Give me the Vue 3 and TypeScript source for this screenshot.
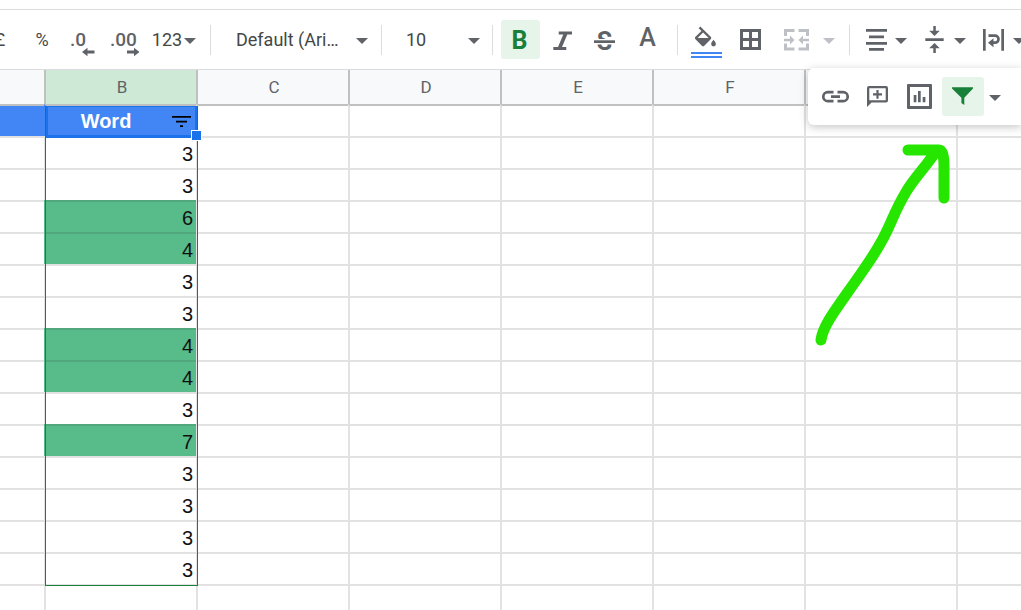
<script setup lang="ts">
import { ref } from 'vue'

interface Row {
  value: string
  marked: boolean
}

const columns: string[] = ['B', 'C', 'D', 'E', 'F', 'G', 'H']
const emptyColumns: string[] = columns.slice(1)
const values: number[] = [3, 3, 6, 4, 3, 3, 4, 4, 3, 7, 3, 3, 3, 3]
const rows: Row[] = values.map((n) => ({ value: String(n), marked: n > 3 }))

const fontFamily = ref('default')
const fontSize = ref('10')
const filterOn = ref(true)
</script>

<template>
  <div class="app">
    <div class="toolbar" role="toolbar" aria-label="Formatting">
      <button type="button" class="tool first">£</button>
      <button type="button" class="tool percent">%</button>
      <button type="button" class="tool decimal-less" aria-label="Decrease decimal places">
        <svg width="40" height="39" viewBox="64 20 40 39">
          <text x="70" y="46" class="digits">.0</text>
          <path d="M82 52l5.500-4.300v2.800h7v3h-7v2.800z" />
        </svg>
      </button>
      <button type="button" class="tool decimal-more" aria-label="Increase decimal places">
        <svg width="44" height="39" viewBox="104 20 44 39">
          <text x="110" y="46" class="digits">.00</text>
          <path d="M139.500 52l-5.500-4.300v2.800h-7v3h7v2.800z" />
        </svg>
      </button>
      <button type="button" class="tool formats">
        <span>123</span>
        <svg class="caret" width="12" height="6" viewBox="0 0 12 6"><path d="M0 0h12L6 6z" /></svg>
      </button>
      <span class="rule"></span>
      <label class="picker family">
        <select v-model="fontFamily" aria-label="Font">
          <option value="default">Default (Ari…</option>
        </select>
        <svg class="caret" width="12" height="6" viewBox="0 0 12 6"><path d="M0 0h12L6 6z" /></svg>
      </label>
      <span class="rule"></span>
      <label class="picker size">
        <select v-model="fontSize" aria-label="Font size">
          <option value="10">10</option>
        </select>
        <svg class="caret" width="12" height="6" viewBox="0 0 12 6"><path d="M0 0h12L6 6z" /></svg>
      </label>
      <span class="rule"></span>
      <div class="styles">
        <button type="button" class="tool square active" aria-label="Bold" aria-pressed="true">
          <svg width="39" height="39" viewBox="501 20 39 39"><text x="511.500" y="49" class="bold">B</text></svg>
        </button>
        <button type="button" class="tool square" aria-label="Italic">
          <svg width="39" height="39" viewBox="543 20 39 39">
            <path d="M558.700 31.500h13.300v3h-13.300zM553.300 47h13v3h-13zM563.500 34h4l-5.700 13.500h-4z" />
          </svg>
        </button>
        <button type="button" class="tool square" aria-label="Strikethrough">
          <svg width="39" height="39" viewBox="585 20 39 39">
            <text x="604.500" y="50" class="bold" text-anchor="middle">S</text>
            <path class="paper" d="M594 39h21v5.500h-21z" />
            <path d="M594 40.300h21V43h-21z" />
          </svg>
        </button>
        <button type="button" class="tool square" aria-label="Text color">
          <svg width="39" height="39" viewBox="627 20 39 39">
            <text x="647.500" y="46" class="medium" text-anchor="middle">A</text>
          </svg>
        </button>
      </div>
      <span class="rule"></span>
      <button type="button" class="tool fill" aria-label="Fill color">
        <svg width="42" height="39" viewBox="685 20 42 39">
          <path
            transform="translate(691.500 26.500) scale(1.160)"
            d="M16.560 8.940L7.620 0 6.210 1.410l2.380 2.380-5.150 5.150c-.59.59-.59 1.540 0 2.120l5.500 5.500c.29.29.68.44 1.060.44s.77-.15 1.060-.44l5.500-5.500c.59-.58.59-1.530 0-2.120zM5.210 10L10 5.210 14.790 10H5.210zM19 11.500s-2 2.170-2 3.500c0 1.100.9 2 2 2s2-.9 2-2c0-1.330-2-3.500-2-3.500z"
          />
          <path class="blue" d="M691 52h31v2h-31zM691 56h31v2h-31z" />
        </svg>
      </button>
      <button type="button" class="tool borders" aria-label="Borders">
        <svg width="42" height="39" viewBox="730 20 42 39">
          <path d="M740 29h21v21h-21zM743 32v6h6v-6zM752 32v6h6v-6zM743 41v6h6v-6zM752 41v6h6v-6z" fill-rule="evenodd" />
        </svg>
      </button>
      <button type="button" class="tool merge" aria-label="Merge cells" disabled>
        <svg width="40" height="39" viewBox="776 20 40 39">
          <path
            d="M784 29h10.500v3H787v4h-3zM809 29h-10.500v3h7.500v4h3zM784 50.500h10.500v-3H787v-4h-3zM809 50.500h-10.500v-3h7.500v-4h3zM784 38.700h6V35.500l4.500 4.500-4.500 4.500v-3.200h-6zM809 38.700h-6V35.500l-4.500 4.500 4.500 4.500v-3.200h6z"
          />
        </svg>
        <svg class="caret" width="12" height="6" viewBox="0 0 12 6"><path d="M0 0h12L6 6z" /></svg>
      </button>
      <span class="rule"></span>
      <button type="button" class="tool align" aria-label="Horizontal align">
        <svg width="42" height="39" viewBox="855 20 42 39">
          <path d="M866 29h21v2.700h-21zM869 35.500h15v2.700h-15zM866 42h21v2.700h-21zM869 48h15v2.700h-15z" />
        </svg>
        <svg class="caret" width="12" height="6" viewBox="0 0 12 6"><path d="M0 0h12L6 6z" /></svg>
      </button>
      <button type="button" class="tool align" aria-label="Vertical align">
        <svg width="42" height="39" viewBox="914 20 42 39">
          <path
            d="M925.300 38.300h18.400V41h-18.400zM933.300 26h2.500v4.700h4l-5.300 5.300-5.300-5.300h4.100zM933.300 53h2.500v-4.700h4l-5.300-5.300-5.300 5.300h4.100z"
          />
        </svg>
        <svg class="caret" width="12" height="6" viewBox="0 0 12 6"><path d="M0 0h12L6 6z" /></svg>
      </button>
      <button type="button" class="tool align" aria-label="Text wrapping">
        <svg width="42" height="39" viewBox="973 20 42 39">
          <path d="M983 29h2.700v21.700H983zM1001.300 29h2.700v21.700h-2.700zM993.500 38.200v9l-5.500-4.500z" />
          <path class="line" d="M988.500 35.700h6.500a3.500 3.500 0 0 1 0 7h-3" />
        </svg>
        <svg class="caret" width="12" height="6" viewBox="0 0 12 6"><path d="M0 0h12L6 6z" /></svg>
      </button>
    </div>

    <div class="overflow-menu" role="toolbar" aria-label="More tools">
      <button type="button" class="tool link" aria-label="Insert link">
        <svg width="40" height="39" viewBox="816 77 40 39">
          <path
            class="line"
            d="M833.500 92.200h-5.700a4.500 4.500 0 0 0 0 9h5.700M837.500 92.200h5.700a4.500 4.500 0 0 1 0 9h-5.700M831 96.700h9"
          />
        </svg>
      </button>
      <button type="button" class="tool note" aria-label="Insert comment">
        <svg width="42" height="39" viewBox="856 77 42 39">
          <path
            fill-rule="evenodd"
            d="M869 86h17q2 0 2 2v12.500q0 2-2 2h-14.500L867 107V88q0-2 2-2zM869.300 88.300v12h16.400v-12z"
          />
          <path d="M876.400 90h2.200v3.300h3.400v2.200h-3.400v3.300h-2.200v-3.300H873v-2.200h3.400z" />
        </svg>
      </button>
      <button type="button" class="tool note" aria-label="Insert chart">
        <svg width="42" height="39" viewBox="898 77 42 39">
          <path
            fill-rule="evenodd"
            d="M908 84h23q1 0 1 1v23q0 1-1 1h-23q-1 0-1-1V85q0-1 1-1zM910 87v19h19V87z"
          />
          <path d="M913.700 95h2.700v7.300h-2.700zM918 91h2.700v11.300H918zM922.700 97h2.700v5.300h-2.700z" />
        </svg>
      </button>
      <button
        type="button"
        class="tool filter"
        :class="{ active: filterOn }"
        :aria-pressed="filterOn"
        aria-label="Filter"
        @click="filterOn = !filterOn"
      >
        <svg width="42" height="39" viewBox="942 77 42 39">
          <path d="M952 87.300h21v1.200l-8.700 9.300v7.200l-2.900-2v-5.200L952 88.500z" />
        </svg>
      </button>
      <button type="button" class="tool views" aria-label="Filter views">
        <svg class="caret" width="12" height="6" viewBox="0 0 12 6"><path d="M0 0h12L6 6z" /></svg>
      </button>
    </div>

    <div class="sheet">
      <table>
        <colgroup>
          <col class="col-a" />
          <col v-for="c in columns.slice(0, 6)" :key="c" class="col" />
          <col />
        </colgroup>
        <thead>
          <tr>
            <th scope="col" aria-label="A"></th>
            <th v-for="(c, i) in columns" :key="c" scope="col" :class="{ current: c === 'B' }">
              <template v-if="i < 5">{{ c }}</template>
            </th>
          </tr>
        </thead>
        <tbody>
          <tr class="titles">
            <td class="title"></td>
            <td class="title">
              <div class="title-cell">
                <span>Word</span>
                <button type="button" aria-label="Filter Word">
                  <svg width="19" height="11" viewBox="0 0 19 11">
                    <path d="M0 0h19v1.700H0zM4 4.700h11v1.700H4zM8 9.300h3V11H8z" />
                  </svg>
                </button>
              </div>
            </td>
            <td v-for="c in emptyColumns" :key="c"></td>
          </tr>
          <tr v-for="(row, i) in rows" :key="i">
            <td></td>
            <td :class="{ marked: row.marked }">{{ row.value }}</td>
            <td v-for="c in emptyColumns" :key="c"></td>
          </tr>
          <tr>
            <td></td>
            <td></td>
            <td v-for="c in emptyColumns" :key="c"></td>
          </tr>
        </tbody>
      </table>
      <div class="filter-range"></div>
      <div class="selection"></div>
      <div class="handle"></div>
      <svg class="drawn-arrow" width="160" height="225" viewBox="800 130 160 225">
        <path
          d="M821 340C823 324 840 304 862 272C893 228 888 222 906 192C914 178 925 168 937 150M908 150H938Q944 149 944 166V198"
        />
      </svg>
    </div>
  </div>
</template>

<style>
body {
  margin: 0;
}
</style>

<style scoped>
.app {
  position: relative;
  height: 100vh;
  overflow: hidden;
  background: #fff;
  color: #5f6368;
  font-family: Roboto, 'Liberation Sans', sans-serif;
}

.toolbar {
  display: flex;
  align-items: center;
  margin-top: 9px;
  height: 59px;
  overflow: hidden;
  border-top: 1px solid #dadce0;
  border-bottom: 1px solid #dadce0;
}

.app::before {
  content: '';
  display: table;
}

.tool {
  display: flex;
  flex: none;
  align-items: center;
  justify-content: center;
  height: 39px;
  padding: 0;
  border: 0;
  border-radius: 3px;
  background: none;
  color: #5f6368;
  font: 400 18px/21px Roboto, 'Liberation Sans', sans-serif;
}

svg {
  display: block;
  flex: none;
  fill: currentColor;
}

.caret {
  margin-top: 3px;
}

.line {
  fill: none;
  stroke: currentColor;
  stroke-width: 2.700;
}

.paper {
  fill: #fff;
}

.blue {
  fill: #4285f4;
}

.digits {
  font-size: 19px;
  font-weight: 500;
}

.bold {
  font-size: 25px;
  font-weight: 700;
}

.medium {
  font-size: 25px;
  font-weight: 500;
}

.first {
  width: 40px;
  margin-left: -20px;
  color: #444746;
}

.percent {
  width: 44px;
  color: #444746;
}

.formats {
  width: 54px;
  gap: 2px;
  padding-right: 2px;
  box-sizing: border-box;
  color: #444746;
}

.formats .caret,
.picker .caret {
  color: #5f6368;
}

.rule {
  flex: none;
  width: 1px;
  height: 30px;
  background: #dadce0;
}

.formats + .rule {
  margin-left: 8px;
}

.picker {
  display: flex;
  flex: none;
  box-sizing: border-box;
  align-items: center;
  height: 39px;
}

.picker select {
  flex: 1;
  min-width: 0;
  padding: 0;
  border: 0;
  appearance: none;
  background: none;
  color: #444746;
  font: 400 18px/21px Roboto, 'Liberation Sans', sans-serif;
}

.family {
  width: 170px;
  padding: 0 13px 0 25px;
}

.size {
  width: 110px;
  padding: 0 12px 0 24px;
}

.styles {
  display: flex;
  gap: 3px;
  padding: 0 11px 0 8px;
}

.square {
  width: 39px;
}

.active {
  background: #e6f4ea;
  color: #188038;
}

.fill {
  width: 42px;
  margin-left: 7px;
}

.borders {
  width: 42px;
  margin-left: 3px;
}

.merge {
  gap: 7px;
  margin: 0 14px 0 4px;
  color: #bdc1c6;
}

.align {
  justify-content: flex-start;
  width: 59px;
}

.rule + .align {
  margin-left: 5px;
}

.align .caret {
  margin-left: -2px;
}

.overflow-menu {
  position: absolute;
  z-index: 2;
  top: 68px;
  right: 0;
  display: flex;
  padding: 9px 15px 9px 8px;
  border-radius: 6px 0 0 6px;
  background: #fff;
  box-shadow: 0 2px 9px rgba(60, 64, 67, 0.3);
}

.link {
  width: 40px;
}

.note {
  width: 42px;
}

.filter {
  width: 42px;
  margin-left: 2px;
}

.views {
  width: 22px;
}

.sheet {
  position: relative;
}

table {
  width: 100%;
  table-layout: fixed;
  border-spacing: 0;
}

.col-a {
  width: 44px;
}

.col {
  width: 152px;
}

th,
td {
  box-sizing: border-box;
  padding: 0;
  border-left: 2px solid #e2e2e2;
}

th:first-child,
td:first-child {
  border-left: 0;
}

th {
  height: 34px;
  padding-left: 2px;
  border-color: #c0c0c0;
  background: #f8f9fa;
  font-size: 17px;
  font-weight: 400;
}

th.current {
  background: #ceead6;
}

td {
  height: 32px;
  padding: 0 3px 2px 0;
  border-top: 2px solid #e2e2e2;
  color: #111;
  font: 400 20px/24px 'Liberation Sans', Arial, sans-serif;
  text-align: right;
  vertical-align: bottom;
}

.titles td {
  border-top-color: #c0c0c0;
}

td.title {
  padding: 0;
  border-left-color: #4285f4;
  background: #4285f4;
}

td.marked {
  border-top-color: #50a87c;
  border-left-color: #57bb8a;
  background: #57bb8a;
}

.title-cell {
  display: flex;
  align-items: center;
  height: 30px;
  color: #fff;
  font-weight: 700;
}

.title-cell span {
  flex: 1;
  padding-right: 2px;
  text-align: center;
}

.title-cell button {
  width: 28px;
  padding: 0 5px 0 4px;
  border: 0;
  background: none;
  color: #000;
}

.filter-range,
.selection,
.handle,
.drawn-arrow {
  position: absolute;
  box-sizing: border-box;
  pointer-events: none;
}

.filter-range {
  top: 36px;
  left: 45px;
  width: 153px;
  height: 480px;
  border: 1px solid #188038;
  border-top: 0;
}

.selection {
  top: 36px;
  left: 46px;
  width: 151px;
  height: 32px;
  border: solid #1a73e8;
  border-width: 1px 2px 3px;
}

.handle {
  top: 60px;
  left: 191px;
  width: 11px;
  height: 11px;
  border: 1px solid #fff;
  background: #1a73e8;
}

.drawn-arrow {
  top: 60px;
  left: 800px;
}

.drawn-arrow path {
  fill: none;
  stroke: #26e600;
  stroke-width: 11;
  stroke-linecap: round;
  stroke-linejoin: round;
}
</style>
